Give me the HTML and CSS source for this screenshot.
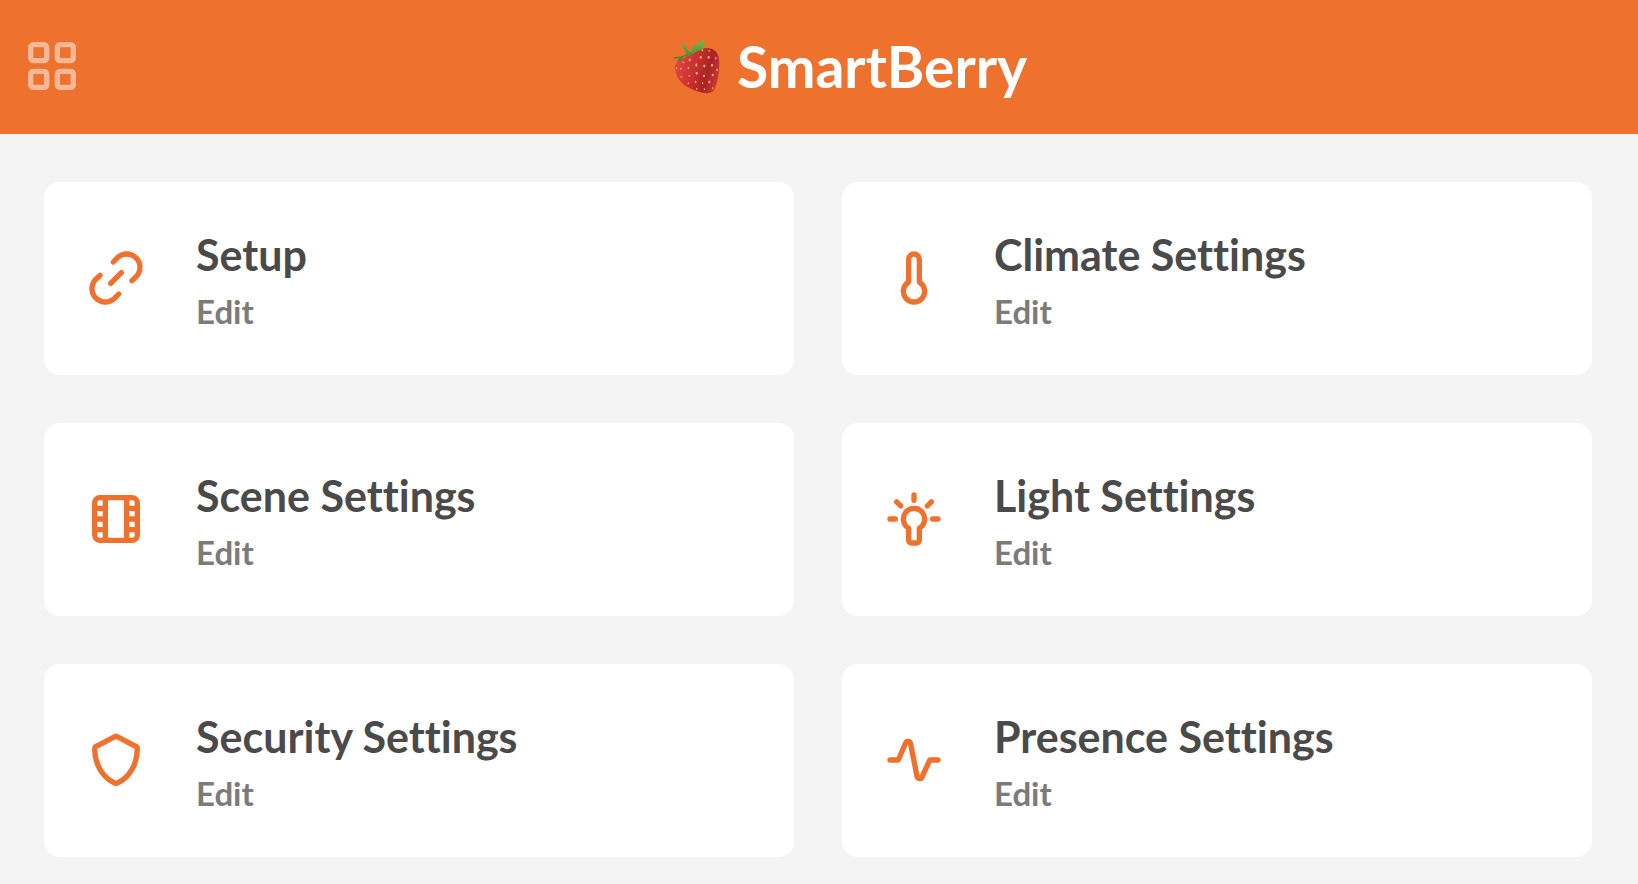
FILE: index.html
```html
<!DOCTYPE html>
<html lang="en">
<head>
<meta charset="utf-8">
<meta name="viewport" content="width=device-width, initial-scale=1">
<title>SmartBerry</title>
<link rel="stylesheet" href="styles.css">
</head>
<body>
<header class="topbar">
  <button class="menu-button" type="button" aria-label="Menu">
    <svg class="icon" viewBox="0 0 24 24" aria-hidden="true">
      <rect x="4" y="4" width="6" height="6" rx="1"/>
      <rect x="14" y="4" width="6" height="6" rx="1"/>
      <rect x="4" y="14" width="6" height="6" rx="1"/>
      <rect x="14" y="14" width="6" height="6" rx="1"/>
    </svg>
  </button>
  <h1 class="brand">
    <svg class="berry" viewBox="30 18 156 174" aria-hidden="true">
      <defs>
        <linearGradient id="flesh" x1="0" y1="0.3" x2="1" y2="0.6">
          <stop offset="0" stop-color="#dd4a42"/>
          <stop offset="0.45" stop-color="#c92f2f"/>
          <stop offset="0.75" stop-color="#ac2226"/>
          <stop offset="1" stop-color="#c93a35"/>
        </linearGradient>
        <linearGradient id="leaf" x1="0" y1="0" x2="0" y2="1">
          <stop offset="0" stop-color="#74bd4c"/>
          <stop offset="1" stop-color="#2f8427"/>
        </linearGradient>
      </defs>
      <path fill="url(#flesh)" d="M42 108C42 96 50 92 62 84C78 76 98 66 116 56C132 48 152 50 163 60C172 68 175 82 175 98C175 126 170 154 160 176C154 187 138 189 120 184C96 178 70 166 56 148C46 136 42 122 42 108Z"/>
      <path fill="url(#leaf)" d="M36 80C46 76 56 78 66 74L78 67C72 58 64 50 63 38L70 36C74 48 80 58 90 64C94 52 98 44 103 37L109 40L108 48C114 38 120 30 127 25L128 34L134 31C132 40 126 48 121 51L133 49C126 56 116 58 108 60C100 62 96 68 94 72L84 71L79 77L72 76C64 80 60 90 48 92C52 86 54 82 54 80C48 84 40 84 36 80Z"/>
      <g fill="#f2c36b">
        <ellipse cx="86" cy="87" rx="3" ry="4"/><ellipse cx="119" cy="79" rx="3" ry="4"/>
        <ellipse cx="143" cy="79" rx="3" ry="4"/><ellipse cx="124" cy="58" rx="2" ry="3"/>
        <ellipse cx="145" cy="60" rx="2" ry="3"/><ellipse cx="164" cy="82" rx="2" ry="4"/>
        <ellipse cx="106" cy="102" rx="3" ry="5"/><ellipse cx="130" cy="105" rx="3" ry="4"/>
        <ellipse cx="153" cy="103" rx="3" ry="4"/><ellipse cx="67" cy="94" rx="2" ry="3"/>
        <ellipse cx="60" cy="113" rx="2" ry="3"/><ellipse cx="82" cy="111" rx="2" ry="4"/>
        <ellipse cx="107" cy="127" rx="3" ry="4"/><ellipse cx="129" cy="135" rx="3" ry="4"/>
        <ellipse cx="155" cy="132" rx="3" ry="4"/><ellipse cx="168" cy="117" rx="2" ry="4"/>
        <ellipse cx="85" cy="134" rx="2" ry="3"/><ellipse cx="61" cy="137" rx="2" ry="3"/>
        <ellipse cx="104" cy="153" rx="2" ry="4"/><ellipse cx="145" cy="153" rx="3" ry="4"/>
        <ellipse cx="125" cy="157" rx="2" ry="3"/><ellipse cx="82" cy="157" rx="2" ry="3"/>
        <ellipse cx="130" cy="175" rx="2" ry="3"/><ellipse cx="155" cy="172" rx="2" ry="3"/>
        <ellipse cx="107" cy="173" rx="2" ry="3"/><ellipse cx="47" cy="112" rx="2" ry="3"/>
      </g>
    </svg>
    <span>SmartBerry</span>
  </h1>
</header>

<main class="cards">
  <section class="card">
    <svg class="icon" viewBox="0 0 24 24" aria-hidden="true">
      <path d="M14 10l-4 4M11 6l1.464-1.536a5 5 0 0 1 7.072 7.072L18 13M13 18l-1.464 1.536a5 5 0 0 1-7.072-7.072L6 11"/>
    </svg>
    <div class="card-text">
      <h2 class="card-title">Setup</h2>
      <a class="card-link" href="#setup">Edit</a>
    </div>
  </section>
  <section class="card">
    <svg class="icon" viewBox="0 0 24 24" aria-hidden="true">
      <path d="M10 5a2 2 0 0 1 4 0v8.535a4 4 0 1 1-4 0V5z"/>
    </svg>
    <div class="card-text">
      <h2 class="card-title">Climate Settings</h2>
      <a class="card-link" href="#climate">Edit</a>
    </div>
  </section>
  <section class="card">
    <svg class="icon" viewBox="0 0 24 24" aria-hidden="true">
      <rect x="4" y="4" width="16" height="16" rx="2"/>
      <path d="M8 4v16M16 4v16M4 8h4M4 12h4M4 16h4M16 8h4M16 12h4M16 16h4"/>
    </svg>
    <div class="card-text">
      <h2 class="card-title">Scene Settings</h2>
      <a class="card-link" href="#scene">Edit</a>
    </div>
  </section>
  <section class="card">
    <svg class="icon" viewBox="0 0 24 24" aria-hidden="true">
      <path d="M10 15.465V20a1 1 0 0 0 1 1h2a1 1 0 0 0 1-1v-4.535a4 4 0 1 0-4 0zM12 3v2M3 12h2M19 12h2M5.5 5.6L7 7.1M18.5 5.6L17 7.1"/>
    </svg>
    <div class="card-text">
      <h2 class="card-title">Light Settings</h2>
      <a class="card-link" href="#light">Edit</a>
    </div>
  </section>
  <section class="card">
    <svg class="icon" viewBox="0 0 24 24" aria-hidden="true">
      <path d="M11.55 3.22a1 1 0 0 1 .9 0L19.4 6.85a1 1 0 0 1 .6.9C20 13.8 16.9 18.6 12.45 20.65a1 1 0 0 1-.9 0C7.1 18.6 4 13.8 4 7.75a1 1 0 0 1 .6-.9z"/>
    </svg>
    <div class="card-text">
      <h2 class="card-title">Security Settings</h2>
      <a class="card-link" href="#security">Edit</a>
    </div>
  </section>
  <section class="card">
    <svg class="icon" viewBox="0 0 24 24" aria-hidden="true">
      <path d="M3 12h3.1L8.85 5.6a.97.97 0 0 1 1.85.25l2.45 12.3a.97.97 0 0 0 1.85.25L17.9 12H21"/>
    </svg>
    <div class="card-text">
      <h2 class="card-title">Presence Settings</h2>
      <a class="card-link" href="#presence">Edit</a>
    </div>
  </section>
</main>
</body>
</html>
```

FILE: styles.css
```css
* {
  box-sizing: border-box;
}

body {
  margin: 0;
  background: #f4f4f4;
  color: #4a4a4a;
  font-family: Lato, "Liberation Sans", sans-serif;
  font-variant-ligatures: none;
}

.topbar {
  display: flex;
  align-items: center;
  padding: 34px 20px 36px;
  background: #ee712e;
}

.menu-button {
  display: block;
  padding: 0;
  border: 0;
  background: none;
  color: rgba(255, 255, 255, 0.5);
  cursor: pointer;
}

.icon {
  display: block;
  flex: none;
  width: 64px;
  height: 64px;
  fill: none;
  stroke: currentColor;
  stroke-width: 2;
  stroke-linecap: round;
  stroke-linejoin: round;
}

.brand {
  display: flex;
  flex: 1;
  align-items: center;
  justify-content: center;
  gap: 14px;
  margin: 0;
  padding-right: 4px;
  color: #fff;
  font-size: 57px;
  font-weight: 700;
  line-height: 64px;
}

.berry {
  width: 52px;
  height: 58px;
}

.cards {
  display: grid;
  grid-template-columns: repeat(2, 1fr);
  gap: 48px;
  padding: 48px 46px 27px 44px;
}

.card {
  display: flex;
  align-items: center;
  gap: 48px;
  padding: 40px 40px 41px;
  border-radius: 16px;
  background: #fff;
}

.card > .icon {
  color: #ee712e;
}

.card-title {
  margin: 0;
  font-size: 43px;
  font-weight: 700;
  line-height: 66px;
}

.card-link {
  display: block;
  color: #7b7b7b;
  font-size: 33px;
  font-weight: 700;
  line-height: 46px;
  text-decoration: none;
}
```
